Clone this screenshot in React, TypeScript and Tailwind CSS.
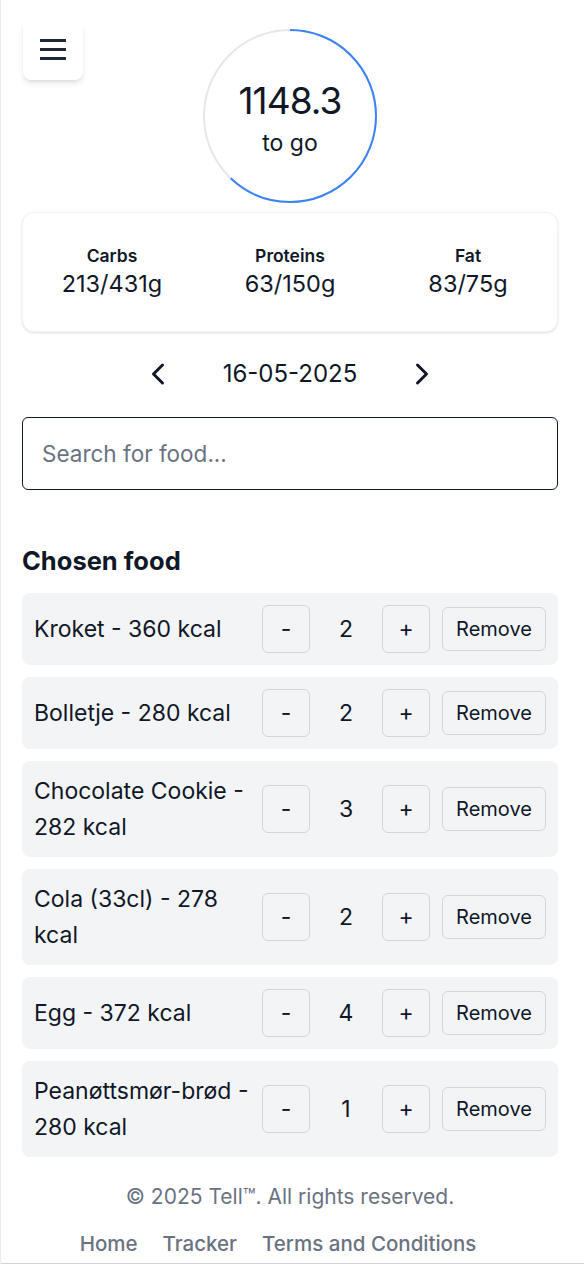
import { ChevronLeft, ChevronRight } from "lucide-react"

interface FoodItem {
  name: string
  kcal: number
  qty: number
}

const foods: FoodItem[] = [
  { name: "Kroket", kcal: 360, qty: 2 },
  { name: "Bolletje", kcal: 280, qty: 2 },
  { name: "Chocolate Cookie", kcal: 282, qty: 3 },
  { name: "Cola (33cl)", kcal: 278, qty: 2 },
  { name: "Egg", kcal: 372, qty: 4 },
  { name: "Peanøttsmør-brød", kcal: 280, qty: 1 },
]

const macros = [
  { label: "Carbs", value: "213/431g" },
  { label: "Proteins", value: "63/150g" },
  { label: "Fat", value: "83/75g" },
]

const ProgressRing = ({ progress }: { progress: number }) => {
  const r = 86
  const c = 2 * Math.PI * r
  return (
    <div className="relative w-[174px] h-[174px]">
      <svg width="174" height="174" viewBox="0 0 174 174" className="absolute inset-0 -rotate-90">
        <circle cx="87" cy="87" r={r} fill="none" stroke="#e5e7eb" strokeWidth="2" />
        <circle
          cx="87"
          cy="87"
          r={r}
          fill="none"
          stroke="#3b82f6"
          strokeWidth="2"
          strokeDasharray={c}
          strokeDashoffset={c * (1 - progress)}
        />
      </svg>
      <div className="absolute inset-0 flex flex-col items-center justify-center pt-[10px]">
        <span className="text-[37px] leading-[44px] text-gray-900 tracking-tight">1148.3</span>
        <span className="text-[23px] leading-[40px] text-gray-900">to go</span>
      </div>
    </div>
  )
}

export default function App() {
  return (
    <div
      className="relative min-h-[1264px] bg-white border-l border-[#ededed] pl-[21px] pr-[26px] flex flex-col text-gray-900"
      style={{ fontFamily: "Inter, 'Noto Sans', sans-serif" }}
    >
      {/* menu button */}
      <button className="absolute top-5 left-[22px] w-[60px] h-[60px] rounded-lg bg-white shadow-md flex items-center justify-center">
        <svg width="26" height="22" viewBox="0 0 26 22" stroke="#1f2937" strokeWidth="3">
          <line x1="0" y1="1.5" x2="26" y2="1.5" />
          <line x1="0" y1="10.5" x2="26" y2="10.5" />
          <line x1="0" y1="19.5" x2="26" y2="19.5" />
        </svg>
      </button>

      <div className="flex justify-center mt-[29px]">
        <ProgressRing progress={0.62} />
      </div>

      {/* macros */}
      <div className="mt-[9px] h-[120px] rounded-xl bg-white shadow-sm border border-gray-100 grid grid-cols-3 items-center">
        {macros.map(m => (
          <div key={m.label} className="flex flex-col items-center">
            <span className="text-[17.5px] leading-[24px] font-semibold">{m.label}</span>
            <span className="text-[23.5px] leading-[32px]">{m.value}</span>
          </div>
        ))}
      </div>

      {/* date */}
      <div className="mt-[22px] h-10 flex items-center justify-center gap-[47px]">
        <ChevronLeft size={36} strokeWidth={2} />
        <span className="text-[24px] text-gray-900">16-05-2025</span>
        <ChevronRight size={36} strokeWidth={2} />
      </div>

      <input
        type="text"
        placeholder="Search for food..."
        className="mt-[23px] h-[73px] w-full rounded-md border border-gray-900 px-[19px] text-[22.5px] placeholder-gray-500 focus:outline-none"
      />

      <h2 className="mt-[55px] text-[25.5px] leading-[32px] font-bold">Chosen food</h2>

      <div className="mt-4 flex flex-col gap-3">
        {foods.map(f => (
          <div key={f.name} className="bg-gray-100 rounded-lg px-3 py-3 flex items-center gap-2">
            <span className="flex-1 text-[23px] leading-[36px]">
              {f.name} - {f.kcal} kcal
            </span>
            <div className="flex items-center">
              <button className="w-12 h-12 rounded-md border border-gray-300 text-[23px]">-</button>
              <span className="w-12 mx-3 text-center text-[23px]">{f.qty}</span>
              <button className="w-12 h-12 rounded-md border border-gray-300 text-[23px]">+</button>
              <button className="ml-3 w-[104px] h-11 rounded-md border border-gray-300 text-[20px]">Remove</button>
            </div>
          </div>
        ))}
      </div>

      <footer className="mt-[26px] flex flex-col items-center text-gray-500">
        <p className="text-[21px] leading-[28px]">© 2025 Tell™. All rights reserved.</p>
        <nav className="mt-[19px] mr-6 flex gap-[25px] font-medium text-[20.5px] leading-[28px]">
          <a>Home</a>
          <a>Tracker</a>
          <a>Terms and Conditions</a>
        </nav>
      </footer>
      <div className="absolute bottom-0 left-0 right-0 h-px bg-gray-300" />
    </div>
  )
}
